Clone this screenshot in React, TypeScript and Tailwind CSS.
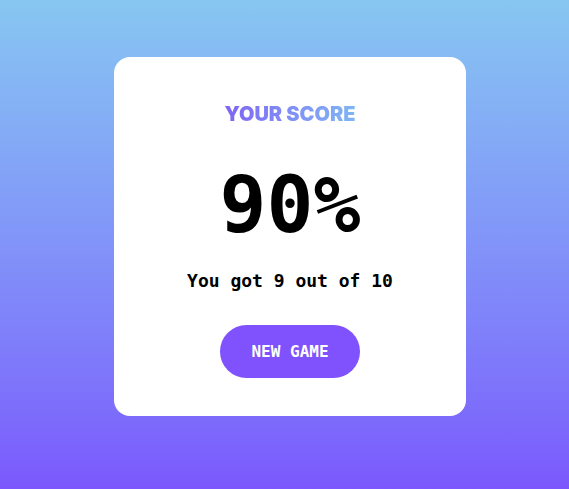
export default function App() {
  return (
    <div className="min-h-[489px] w-full bg-gradient-to-b from-[#87c6f1] to-[#7b58fc] flex justify-center pl-[11px] pt-[57px]">
      <div className="w-[352px] h-[359px] bg-white rounded-[16px] flex flex-col items-center font-['DejaVu_Sans_Mono',monospace]">
        <h1 className="mt-[44px] text-[20px] leading-[26px] font-black tracking-[0px] bg-gradient-to-r from-[#7f63f4] to-[#7fb6f4] bg-clip-text text-transparent font-['Inter',sans-serif]">
          YOUR SCORE
        </h1>
        <div className="mt-[38px] text-[78px] leading-[80px] font-bold text-black">
          90%
        </div>
        <div className="mt-[24px] text-[18px] leading-[24px] font-bold text-black">
          You got 9 out of 10
        </div>
        <button className="mt-[32px] w-[140px] h-[53px] rounded-full bg-[#7f52fd] text-white text-[16px] font-bold">
          NEW GAME
        </button>
      </div>
    </div>
  );
}
